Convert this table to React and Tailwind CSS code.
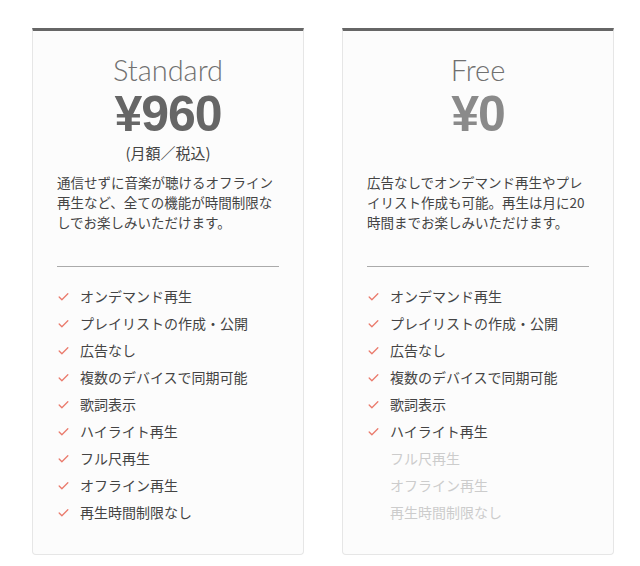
import { Check } from "lucide-react";

const plans = [
    {
        name: "Standard",
        price: "¥960",
        note: "(月額／税込)",
        description: "通信せずに音楽が聴けるオフライン再生など、全ての機能が時間制限なしでお楽しみいただけます。",
        included: 9
    },
    {
        name: "Free",
        price: "¥0",
        note: "",
        description: "広告なしでオンデマンド再生やプレイリスト作成も可能。再生は月に20時間までお楽しみいただけます。",
        included: 6
    }
];

const features = [
    "オンデマンド再生",
    "プレイリストの作成・公開",
    "広告なし",
    "複数のデバイスで同期可能",
    "歌詞表示",
    "ハイライト再生",
    "フル尺再生",
    "オフライン再生",
    "再生時間制限なし"
];

const PlanCard = ({ plan }) => (
    <div className="flex w-[272px] flex-col rounded-b border-x border-b border-t-[3px] border-x-[#e6e6e6] border-b-[#e6e6e6] border-t-[#666666] bg-[#fcfcfc] px-6 pb-[28px]">
        <h2 className="mt-[21px] text-center font-['Lato',sans-serif] text-[29px] font-light leading-[36px] text-[#707070]">
            {plan.name}
        </h2>
        <p
            className={`mt-[1px] text-center font-['Liberation_Sans',sans-serif] text-[50px] font-bold leading-[50px] tracking-[-1px] ${plan.note ? "text-[#666666]" : "text-[#8a8a8a]"}`}
        >
            {plan.price}
        </p>
        <p className="mt-[4px] h-[20px] text-center font-['Noto_Sans_CJK_JP',sans-serif] text-[15px] leading-[20px] text-[#444444]">
            {plan.note}
        </p>
        <p className="mt-[9px] font-['Noto_Sans_CJK_JP',sans-serif] text-[13.5px] leading-[20px] text-[#444444]">
            {plan.description}
        </p>
        <div className="mt-[34px] border-t border-[#aaaaaa]" />
        <ul className="mt-[16px] flex flex-col">
            {features.map((feature, index) => {
                const active = index < plan.included;
                return (
                    <li key={feature} className="flex h-[27px] items-center gap-[10px] font-['Noto_Sans_CJK_JP',sans-serif] text-[14px]">
                        <span className="flex w-[13px] justify-center">
                            {active && <Check size={14} strokeWidth={2.4} className="text-[#ea7a6c]" />}
                        </span>
                        <span className={active ? "text-[#444444]" : "text-[#cccccc]"}>{feature}</span>
                    </li>
                );
            })}
        </ul>
    </div>
);

const App = () => {
    return (
        <div className="flex min-h-[566px] w-[640px] items-start gap-[38px] bg-white pl-[32px] pt-[28px]">
            {plans.map((plan) => (
                <PlanCard key={plan.name} plan={plan} />
            ))}
        </div>
    );
};

export default App;
